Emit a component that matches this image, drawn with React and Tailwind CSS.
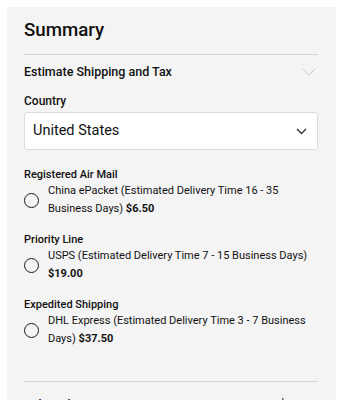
export default function App() {
  const Radio = () => (
    <span className="block h-[15px] w-[15px] shrink-0 rounded-full border-[1.5px] border-[#1a1a1a]" />
  );
  const Option = ({ title, text, price, first }) => (
    <div className={first ? "mt-[18px]" : "mt-[15px]"}>
      <div className="text-[11px] font-medium leading-[14px] text-[#111]">{title}</div>
      <div className="flex items-center gap-[9px]">
        <Radio />
        <div className="text-[11px] leading-[18px] text-[#111]">
          {text} <span className="font-bold">{price}</span>
        </div>
      </div>
    </div>
  );
  return (
    <div className="h-[400px] overflow-hidden bg-white pl-[7px] pr-[9px] pt-[7px] font-[Roboto,'Liberation_Sans',sans-serif]">
      <div className="h-[420px] bg-[#f4f4f4] pl-[17px] pr-[18px] pt-[11px]">
        <h1 className="text-[18.7px] font-medium leading-[24px] text-[#111]">Summary</h1>
        <div className="mt-[12px] h-px bg-[#d6d6d6]" />
        <div className="mt-[8px] flex items-center justify-between">
          <span className="text-[12.5px] font-medium leading-[18px] text-[#111]">Estimate Shipping and Tax</span>
          <svg width="14" height="8" viewBox="0 0 14 8" className="mr-[2px]">
            <path d="M1 1l6 6 6-6" fill="none" stroke="#c8c8c8" strokeWidth="1" />
          </svg>
        </div>
        <div className="mt-[12px] text-[12px] font-medium leading-[16px] text-[#111]">Country</div>
        <div className="mt-[3px] flex h-[38px] items-center justify-between rounded-[3px] border border-[#dcdcdc] bg-white pl-[8px] pr-[10px]">
          <span className="text-[14.5px] text-[#111]">United States</span>
          <svg width="11" height="7" viewBox="0 0 11 7">
            <path d="M1 1l4.5 4.5L10 1" fill="none" stroke="#333" strokeWidth="1.4" />
          </svg>
        </div>
        <Option first title="Registered Air Mail" text="China ePacket (Estimated Delivery Time 16 - 35 Business Days)" price="$6.50" />
        <Option title="Priority Line" text="USPS (Estimated Delivery Time 7 - 15 Business Days)" price="$19.00" />
        <Option title="Expedited Shipping" text="DHL Express (Estimated Delivery Time 3 - 7 Business Days)" price="$37.50" />
        <div className="mt-[33px] h-px bg-[#d6d6d6]" />
        <div className="mt-[14px] flex justify-between text-[12.5px] font-medium leading-[18px] text-[#111]">
          <span>Subtotal</span>
          <span>$59.00</span>
        </div>
      </div>
    </div>
  );
}
